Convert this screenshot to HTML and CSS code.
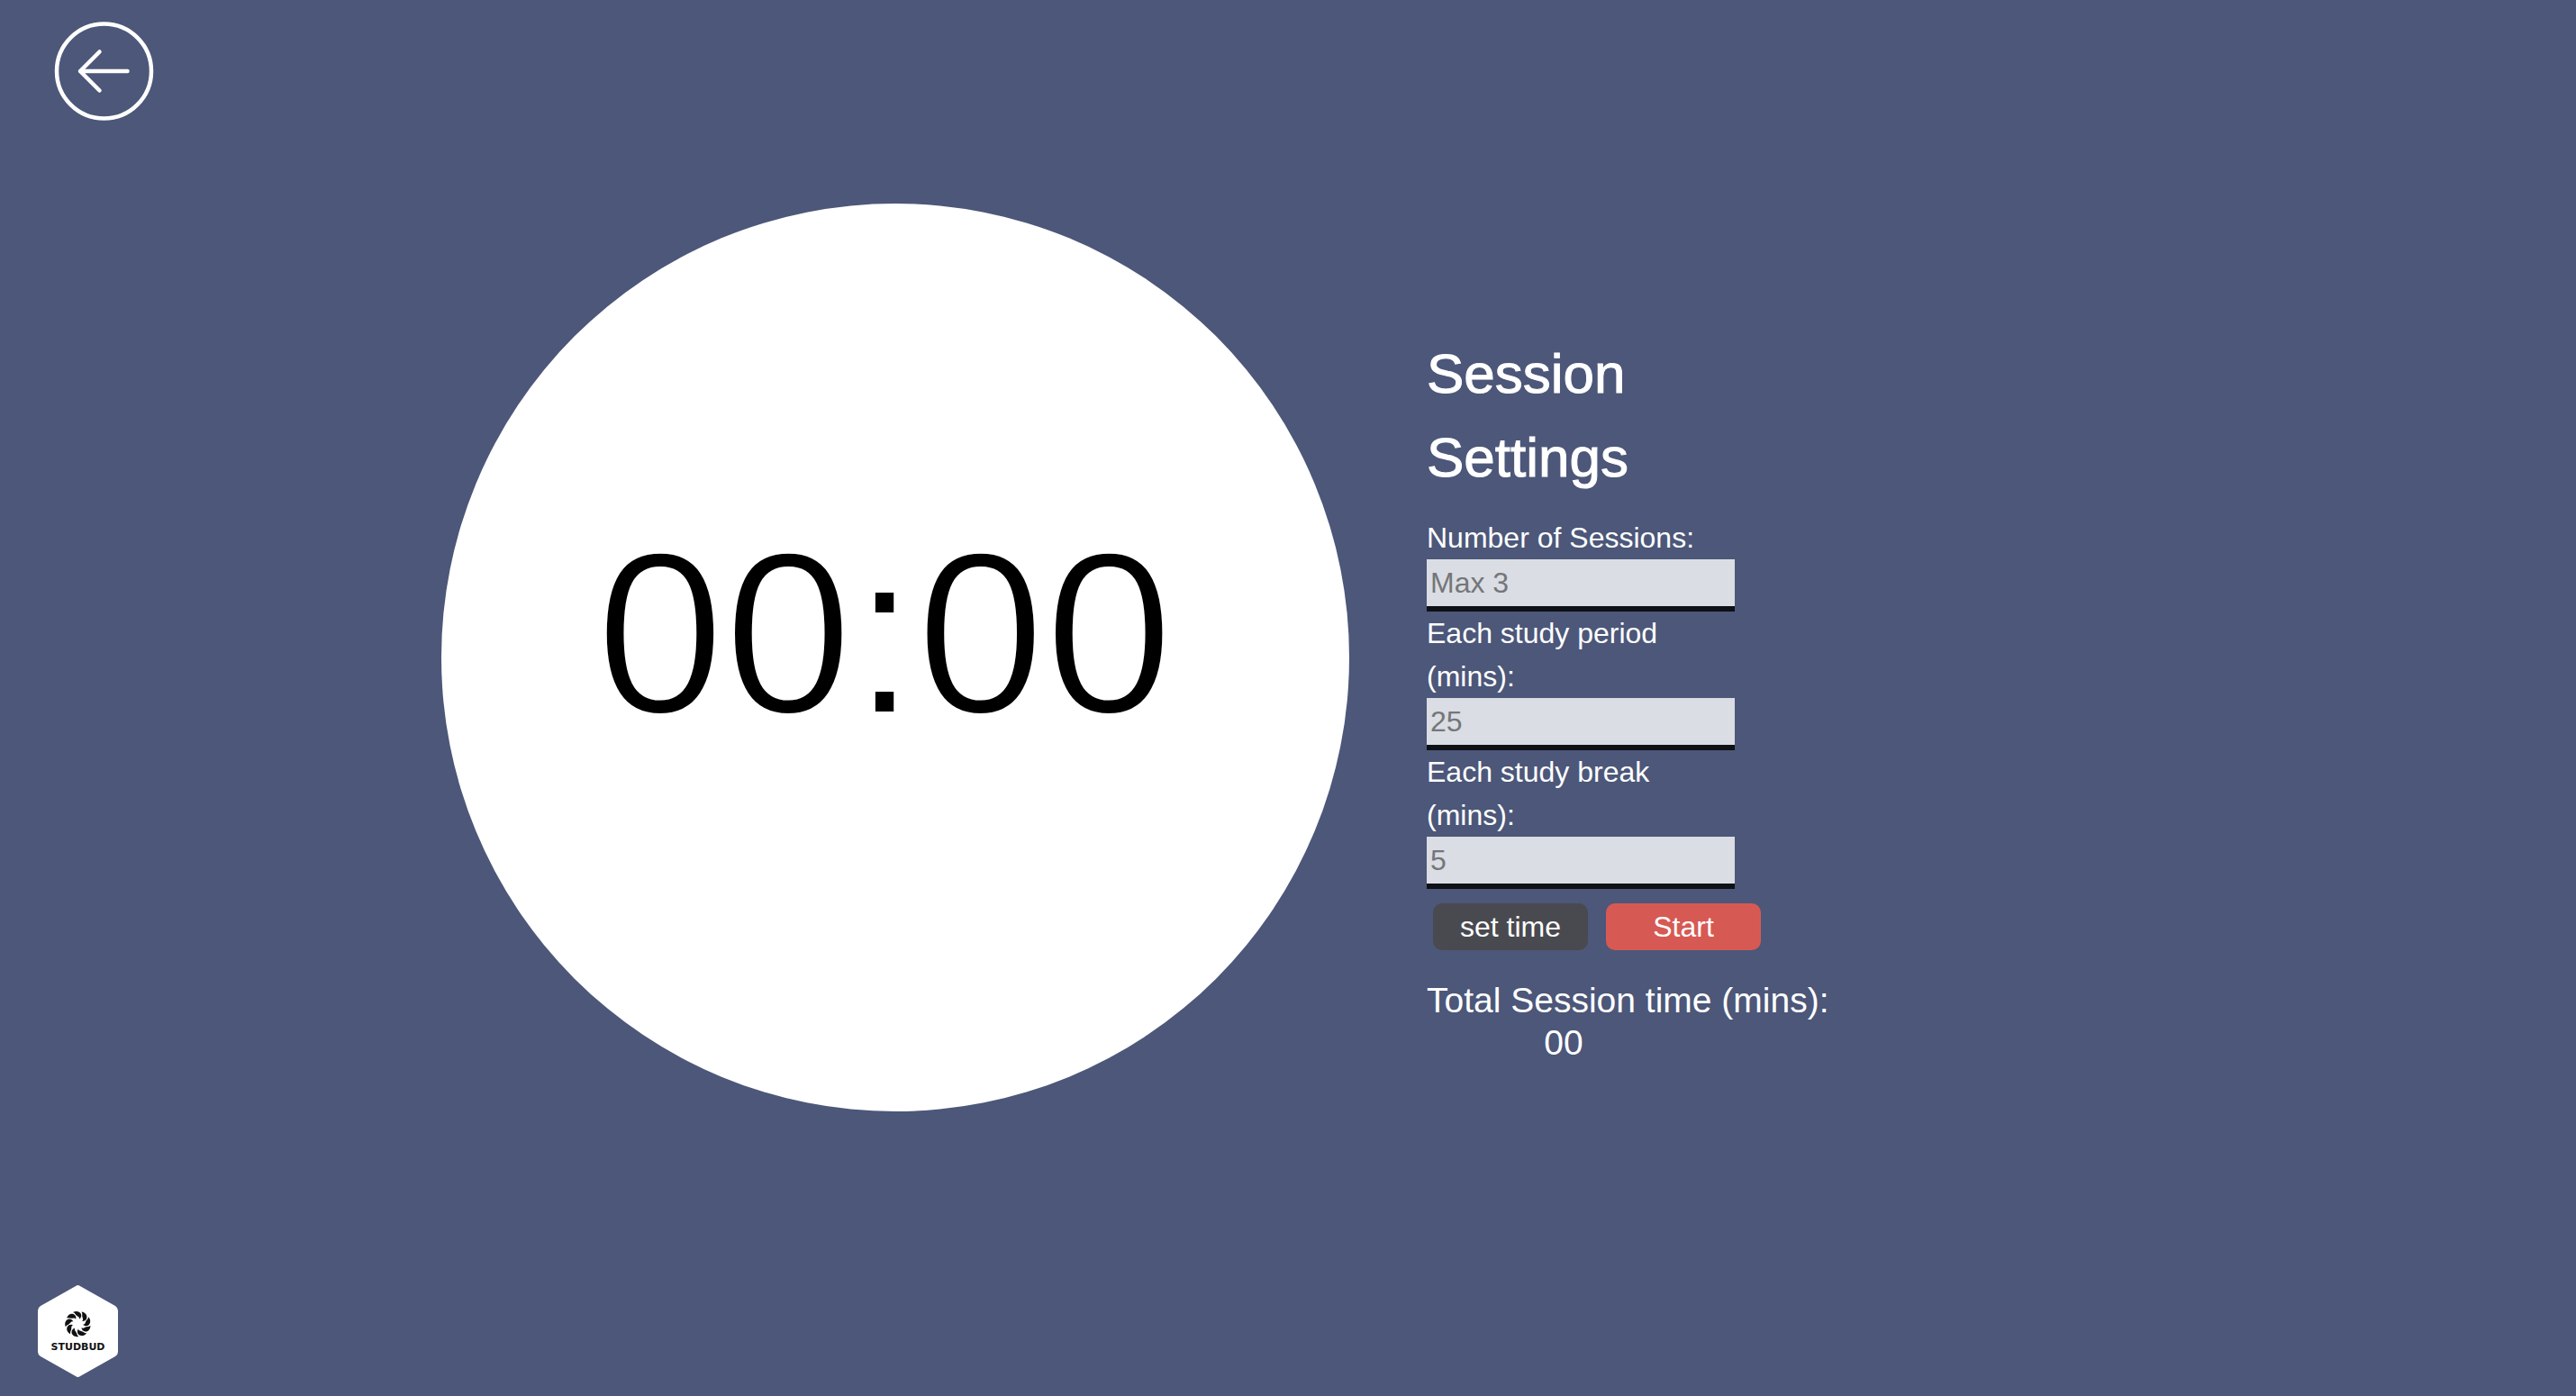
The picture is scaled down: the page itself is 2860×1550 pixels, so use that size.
FILE: index.html
```html
<!DOCTYPE html>
<html lang="en">
<head>
<meta charset="utf-8">
<meta name="viewport" content="width=device-width, initial-scale=1">
<title>Studbud timer</title>
<link rel="stylesheet" href="styles.css">
</head>
<body>
<header class="topbar">
  <a class="back" href="#" aria-label="Back">
    <svg class="back-icon" viewBox="0 0 112 112" fill="none" stroke="#fff" stroke-width="4.5" stroke-linecap="round" stroke-linejoin="round">
      <circle cx="55.500" cy="56" r="52.500"/>
      <path d="M81.500 56H29M50.500 34.500L29 56L50.500 77.500"/>
    </svg>
  </a>
</header>
<main class="content">
  <section class="timer"><span class="clock">00:00</span></section>
  <section class="panel">
    <h1 class="title">Session Settings</h1>
    <form class="settings">
      <label class="label" for="sessions">Number of Sessions:</label>
      <input class="field" id="sessions" type="text" placeholder="Max 3">
      <label class="label" for="study">Each study period (mins):</label>
      <input class="field" id="study" type="text" placeholder="25">
      <label class="label" for="rest">Each study break (mins):</label>
      <input class="field" id="rest" type="text" placeholder="5">
    </form>
    <div class="actions">
      <button class="button" type="button">set time</button>
      <button class="button button-start" type="button">Start</button>
    </div>
    <p class="total">Total Session time (mins):<span class="total-value">00</span></p>
  </section>
</main>
<footer class="footer">
  <svg class="logo" viewBox="0 0 90 104" role="img" aria-label="Studbud">
    <path d="M42 2Q44.500 0 47 2L86 24Q89 26 89 29V75Q89 78 86 80L47 102Q44.500 104 42 102L3 80Q0 78 0 75V29Q0 26 3 24L42 2Z" fill="#fff"/>
    <defs><path id="petal" d="M-5.500 -12.900C-2.500 -14.900 1.600 -14.400 3.200 -11.600C4.400 -9.300 3.600 -7 1.600 -5.400C1.700 -7 1 -7.900 -.6 -8.700C-2.900 -9.900 -2.800 -12 -5.500 -12.900Z"/></defs>
    <g transform="translate(44.500 44)" fill="#111">
      <use href="#petal"/>
      <use href="#petal" transform="rotate(40)"/>
      <use href="#petal" transform="rotate(80)"/>
      <use href="#petal" transform="rotate(120)"/>
      <use href="#petal" transform="rotate(160)"/>
      <use href="#petal" transform="rotate(200)"/>
      <use href="#petal" transform="rotate(240)"/>
      <use href="#petal" transform="rotate(280)"/>
      <use href="#petal" transform="rotate(320)"/>
    </g>
    <text class="logo-text" x="44.500" y="73" text-anchor="middle">STUDBUD</text>
  </svg>
</footer>
</body>
</html>
```
FILE: styles.css
```css
* {
  box-sizing: border-box;
}

body {
  display: flex;
  flex-direction: column;
  min-height: 100vh;
  margin: 0;
  background: #4c5779;
  color: #fff;
  font-family: "Liberation Sans", Arial, sans-serif;
  font-size: 32px;
  line-height: 48px;
}

.topbar {
  display: flex;
  padding: 23px 60px 0;
}

.back {
  display: flex;
}

.back-icon {
  width: 112px;
  height: 112px;
}

.content {
  display: flex;
  gap: 86px;
  padding: 91px 60px 0 490px;
}

.timer {
  display: flex;
  flex: 0 1 1008px;
  align-items: center;
  justify-content: center;
  aspect-ratio: 1;
  padding: 0 24px 54px 0;
  border-radius: 50%;
  background: #fff;
}

.clock {
  color: #000;
  font-size: 256px;
  line-height: 256px;
  -webkit-text-stroke: 4px #fff;
}

.panel {
  padding-top: 142px;
}

.title {
  max-width: 342px;
  margin: 0 0 19px;
  font-size: 62px;
  font-weight: 400;
  line-height: 93px;
  -webkit-text-stroke: 1px #fff;
}

.settings {
  display: flex;
  flex-direction: column;
  width: 342px;
}

.field {
  height: 58px;
  padding: 0 4px;
  border: 0;
  border-bottom: 6px solid #0e1116;
  border-radius: 0;
  background: #dadde3;
  color: #000;
  font: inherit;
}

.field::placeholder {
  color: #74767a;
  opacity: 1;
}

.actions {
  display: flex;
  gap: 20px;
  padding: 16px 7px 0;
}

.button {
  width: 172px;
  height: 52px;
  padding: 0;
  border: 0;
  border-radius: 10px;
  background: #494a50;
  color: #fff;
  font: inherit;
}

.button-start {
  background: #d65a53;
}

.total {
  display: flex;
  flex-direction: column;
  margin: 32px 0 0;
  font-size: 39px;
  line-height: 47px;
}

.total-value {
  width: 304px;
  text-align: center;
}

.footer {
  display: flex;
  margin-top: auto;
  padding: 0 42px 20px;
}

.logo {
  width: 90px;
  height: 104px;
}

.logo-text {
  fill: #111;
  font: 700 11px "DejaVu Sans", sans-serif;
}
```
